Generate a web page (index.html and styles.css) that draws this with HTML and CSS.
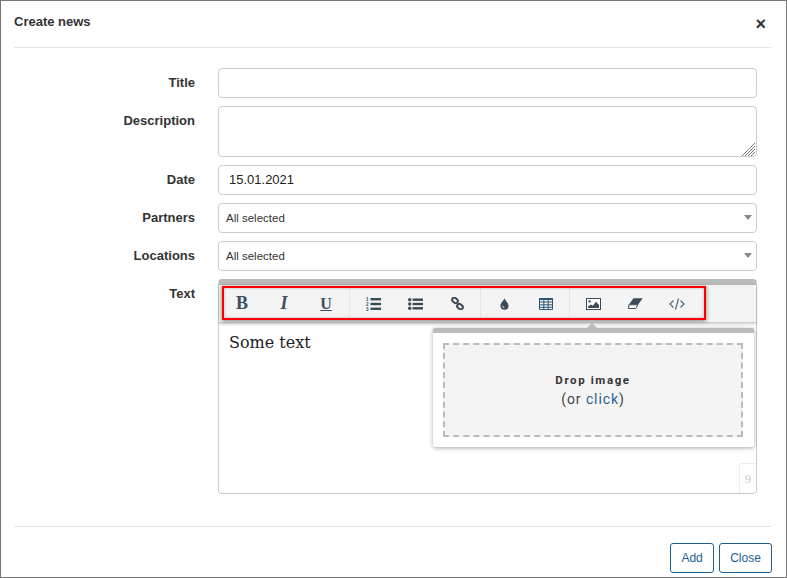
FILE: index.html
```html
<!DOCTYPE html>
<html lang="en">
<head>
  <meta charset="UTF-8">
  <title>Create news</title>
  <link rel="stylesheet" href="styles.css">
</head>
<body>

  <div class="modal">
    <div class="modal-header">
      <h4 class="modal-title">Create news</h4>
      <span class="close-x">×</span>
    </div>

    <div class="modal-body">
      <div class="row">
        <label class="row-label">Title</label>
        <input class="field" type="text">
      </div>
      <div class="row">
        <label class="row-label">Description</label>
        <div class="area-wrap">
          <textarea class="field field-area"></textarea>
          <svg class="grip" width="15" height="14" viewBox="0 0 15 14"><path d="M14 1 1 14M14 4 4 14M14 7 7 14M14 10 10 14" fill="none" stroke="#777" stroke-width="1"/></svg>
        </div>
      </div>
      <div class="row">
        <label class="row-label">Date</label>
        <input class="field field-date" type="text" value="15.01.2021">
      </div>
      <div class="row">
        <label class="row-label">Partners</label>
        <div class="field field-select">All selected<span class="caret"></span></div>
      </div>
      <div class="row">
        <label class="row-label">Locations</label>
        <div class="field field-select">All selected<span class="caret"></span></div>
      </div>
      <div class="row">
        <label class="row-label">Text</label>

        <div class="editor">
          <div class="toolbar">
            <button class="tool tool-text tool-b">B</button>
            <button class="tool tool-text tool-i">I</button>
            <button class="tool tool-text tool-u">U</button>
            <span class="sep"></span>
            <button class="tool">
              <svg width="15" height="14" viewBox="0 0 15 14"><g fill="#3b4a57"><rect x="4.5" y="1" width="10.5" height="2.4"/><rect x="4.5" y="5.8" width="10.5" height="2.4"/><rect x="4.5" y="10.6" width="10.5" height="2.4"/><text class="ol-num" x="0" y="4.4">1</text><text class="ol-num" x="0" y="9.2">2</text><text class="ol-num" x="0" y="14">3</text></g></svg>
            </button>
            <button class="tool">
              <svg width="15" height="12" viewBox="0 0 15 12"><g fill="#3b4a57"><circle cx="1.7" cy="1.7" r="1.7"/><circle cx="1.7" cy="6" r="1.7"/><circle cx="1.7" cy="10.3" r="1.7"/><rect x="4.5" y=".5" width="10.5" height="2.4"/><rect x="4.5" y="4.8" width="10.5" height="2.4"/><rect x="4.5" y="9.1" width="10.5" height="2.4"/></g></svg>
            </button>
            <button class="tool">
              <svg width="13" height="13" viewBox="0 0 13 13"><g fill="none" stroke="#3b4a57" stroke-width="2"><rect x="1" y="1.2" width="6" height="4.4" rx="2.2" transform="rotate(40 4 3.4)"/><rect x="6" y="7.4" width="6" height="4.4" rx="2.2" transform="rotate(40 9 9.6)"/></g></svg>
            </button>
            <span class="sep"></span>
            <button class="tool">
              <svg width="9" height="12" viewBox="0 0 10 13"><path d="M5 .2C5.6 2.6 9.5 5.5 9.5 8.5A4.5 4.5 0 0 1 .5 8.5C.5 5.5 4.4 2.6 5 .2Z" fill="#3b4a57"/><path d="M3 8.5a2.2 2.2 0 0 0 1.8 2.3" fill="none" stroke="#dfe3e6" stroke-width="1"/></svg>
            </button>
            <button class="tool">
              <svg width="14" height="12" viewBox="0 0 14 12"><path d="M.5.5h13v11H.5ZM.5 4h13M.5 6.8h13M.5 9.3h13M4.8 1v10.5M9.2 1v10.5" fill="none" stroke="#2f5674" stroke-width="1"/><rect x="0" y="0" width="14" height="2" fill="#2f5674"/></svg>
            </button>
            <span class="sep"></span>
            <button class="tool">
              <svg width="15" height="12" viewBox="0 0 15 12"><rect x=".5" y=".5" width="14" height="11" fill="#fff" stroke="#3b4a57" stroke-width="1"/><circle cx="3.6" cy="3.4" r="1.2" fill="#3b4a57"/><path d="M2 10V8.6L5 6.4 6.8 7.8 10 3.8 13 7V10Z" fill="#3b4a57"/></svg>
            </button>
            <button class="tool">
              <svg width="15" height="11" viewBox="0 0 15 11"><path d="M5.5 .3H14.7L10 6.8H.8Z" fill="#3b4a57"/><path d="M.8 6.8H10L7.6 10.5H.6Z" fill="#fff" stroke="#3b4a57" stroke-width="1"/></svg>
            </button>
            <button class="tool">
              <svg width="16" height="12" viewBox="0 0 16 12"><path d="M4.5 2.5 1 6 4.5 9.5M11.5 2.5 15 6 11.5 9.5" fill="none" stroke="#4a6a85" stroke-width="1.2"/><path d="M9.5 .5 6.5 11.5" fill="none" stroke="#4a6a85" stroke-width="1.2"/></svg>
            </button>
          </div>

          <div class="editor-text">Some text</div>
          <div class="counter">9</div>

          <div class="highlight"></div>

          <div class="image-popup">
            <span class="popup-arrow"></span>
            <div class="dropzone">
              <strong>Drop image</strong>
              <div class="dropzone-sub">(or <span class="dropzone-link">click</span>)</div>
            </div>
          </div>
        </div>
      </div>
    </div>

    <div class="modal-footer">
      <button class="btn">Add</button>
      <button class="btn">Close</button>
    </div>
  </div>

</body>
</html>
```

FILE: styles.css
```css
* { box-sizing: border-box; }
body { margin: 0; padding: 0; font-family: "Liberation Sans", Arial, sans-serif; font-size: 13px; color: #333; background: #fff; }

.modal { width: 787px; height: 578px; border: 1px solid #777; overflow: hidden; }
.modal-header {
  display: flex;
  justify-content: space-between;
  height: 47px;
  margin: 0 14px 0 13px;
  border-bottom: 1px solid #e5e5e5;
}
.modal-title { margin: 13px 0 0; font-size: 13px; line-height: 15px; font-weight: bold; }
.close-x { margin: 14px 6px 0 0; font-size: 18px; line-height: 18px; font-weight: bold; color: #333; }

.modal-body { padding: 20px 29px 0 0; height: 478px; }
.row { display: flex; margin-bottom: 8px; }
.row-label { width: 194px; padding-top: 7px; margin-right: 23px; text-align: right; font-weight: bold; line-height: 15px; }

.field {
  display: block;
  width: 539px;
  height: 30px;
  padding: 0 10px;
  border: 1px solid #ccc;
  border-radius: 4px;
  background: #fff;
  font-family: "Liberation Sans", Arial, sans-serif;
  font-size: 13px;
  color: #333;
}
.area-wrap { position: relative; width: 539px; height: 51px; }
.field-area { height: 51px; resize: none; }
.grip { position: absolute; right: 1px; bottom: 1px; }
.field-date { padding-bottom: 2px; color: #222; }
.field-select { display: flex; align-items: center; justify-content: space-between; padding: 0 4px 0 7px; font-size: 11.5px; }
.caret { width: 0; height: 0; margin-top: -2px; border-left: 4px solid transparent; border-right: 4px solid transparent; border-top: 5px solid #888; }

.editor {
  position: relative;
  width: 539px;
  height: 215px;
  border: 1px solid #ccc;
  border-top: 6px solid #bbb;
  border-radius: 4px;
}
.toolbar {
  display: flex;
  align-items: center;
  height: 38px;
  padding-left: 2px;
  background: #f4f4f4;
  border-bottom: 1px solid #ccc;
  box-shadow: 0 1px 3px rgba(0, 0, 0, .2);
}
.tool {
  display: flex;
  align-items: center;
  justify-content: center;
  width: 42px;
  height: 34px;
  padding: 0;
  border: 0;
  background: none;
}
.tool-text { font-family: "Liberation Serif", "Times New Roman", serif; font-size: 18px; color: #3b4f60; }
.tool-b { font-weight: bold; }
.tool-i { font-style: italic; font-weight: bold; }
.tool-u { font-size: 16px; font-weight: bold; text-decoration: underline; }
.ol-num { font-family: "Liberation Sans", sans-serif; font-size: 4.5px; font-weight: bold; }
.sep { width: 1px; height: 34px; margin: 0 2px; background: #e6e6e6; }

.editor-text { padding: 10px 10px; font-family: "DejaVu Serif", serif; font-size: 16px; line-height: 20px; color: #222; }
.counter {
  position: absolute;
  right: 0;
  bottom: 0;
  width: 17px;
  height: 30px;
  border: 1px solid #eee;
  border-width: 1px 0 0 1px;
  font-family: "Liberation Serif", serif;
  font-size: 13px;
  line-height: 30px;
  text-align: center;
  color: #ccc;
}

/* red frame painted over the toolbar */
.highlight {
  position: absolute;
  left: 3px;
  top: 1px;
  width: 484px;
  height: 34px;
  border: 2px solid #f00;
  box-shadow: 0 1px 4px rgba(0, 0, 0, .5), inset 0 0 3px rgba(0, 0, 0, .25);
}

.image-popup {
  position: absolute;
  left: 214px;
  top: 43px;
  width: 321px;
  height: 119px;
  padding: 10px 11px 10px 10px;
  background: #fff;
  border-top: 5px solid #bbb;
  border-radius: 2px;
  box-shadow: 0 1px 4px rgba(0, 0, 0, .35);
}
.popup-arrow {
  position: absolute;
  left: 154px;
  top: -10px;
  width: 0;
  height: 0;
  border-left: 5px solid transparent;
  border-right: 5px solid transparent;
  border-bottom: 5px solid #bbb;
}
.dropzone {
  display: flex;
  flex-direction: column;
  align-items: center;
  justify-content: center;
  height: 94px;
  border: 2px dashed #bbb;
  background: #f4f4f4;
  font-family: Roboto, sans-serif;
}
.dropzone strong { font-size: 11.5px; line-height: 18px; letter-spacing: 1.6px; color: #333; }
.dropzone-sub { font-size: 14px; line-height: 20px; letter-spacing: .9px; color: #444; }
.dropzone-link { color: #2a5f8f; }

.modal-footer {
  display: flex;
  justify-content: flex-end;
  gap: 5px;
  height: 51px;
  margin: 0 14px 0 13px;
  padding-top: 16px;
  border-top: 1px solid #e5e5e5;
}
.btn {
  height: 30px;
  padding: 0 10.2px;
  border: 1px solid #1a5f96;
  border-radius: 3px;
  background: #fff;
  color: #1a5f96;
  font-family: "Liberation Sans", Arial, sans-serif;
  font-size: 12px;
}
```
